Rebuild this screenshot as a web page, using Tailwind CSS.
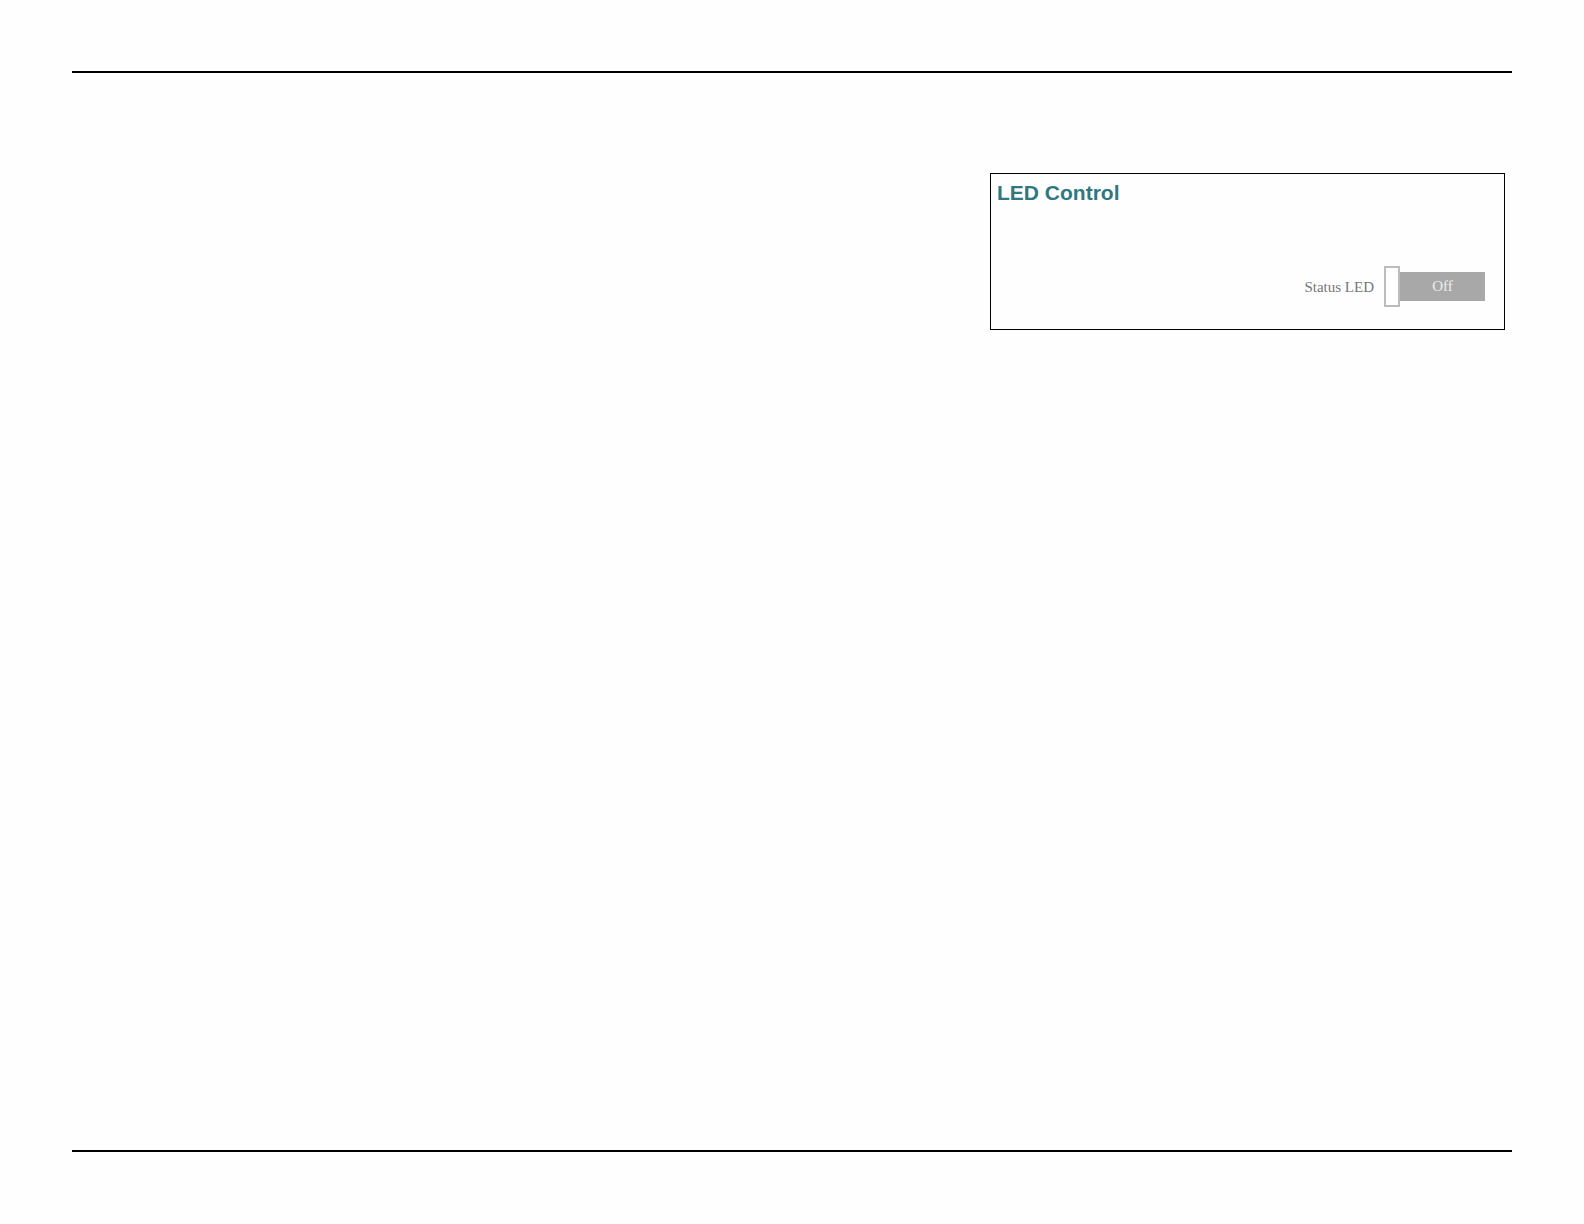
<!DOCTYPE html>
<html lang="en">
<head>
<meta charset="utf-8">
<meta name="viewport" content="width=device-width, initial-scale=1">
<title>LED Control</title>
<script src="https://cdn.jsdelivr.net/npm/@tailwindcss/browser@4"></script>
</head>
<body class="flex min-h-screen flex-col bg-[#fefefe] px-[72px] pt-[71px] pb-[72px]">
<main class="flex flex-1 flex-col items-end border-y-2 border-black pt-[100px] pr-[7px]">
  <section class="w-full max-w-[515px] border border-black bg-[#fefefe] pt-[7px] pr-[19px] pb-[22px] pl-[6px]">
    <h1 class="font-['Liberation_Sans',sans-serif] text-[21px] leading-6 font-bold text-[#30787f]">LED Control</h1>
    <div class="mt-[61px] flex items-center justify-end gap-[10px]">
      <span id="status-led" class="font-['Liberation_Serif',serif] text-[15px] leading-7 text-[#777777]">Status LED</span>
      <button type="button" role="switch" aria-checked="false" aria-labelledby="status-led" class="flex items-center">
        <span class="h-[41px] w-4 border-2 border-[#bcbcbc] bg-white"></span>
        <span class="h-[29px] w-[85px] bg-[#a8a8a8] text-center font-['Liberation_Serif',serif] text-[15px] leading-7 text-[#eeeeee]">Off</span>
      </button>
    </div>
  </section>
</main>
</body>
</html>
